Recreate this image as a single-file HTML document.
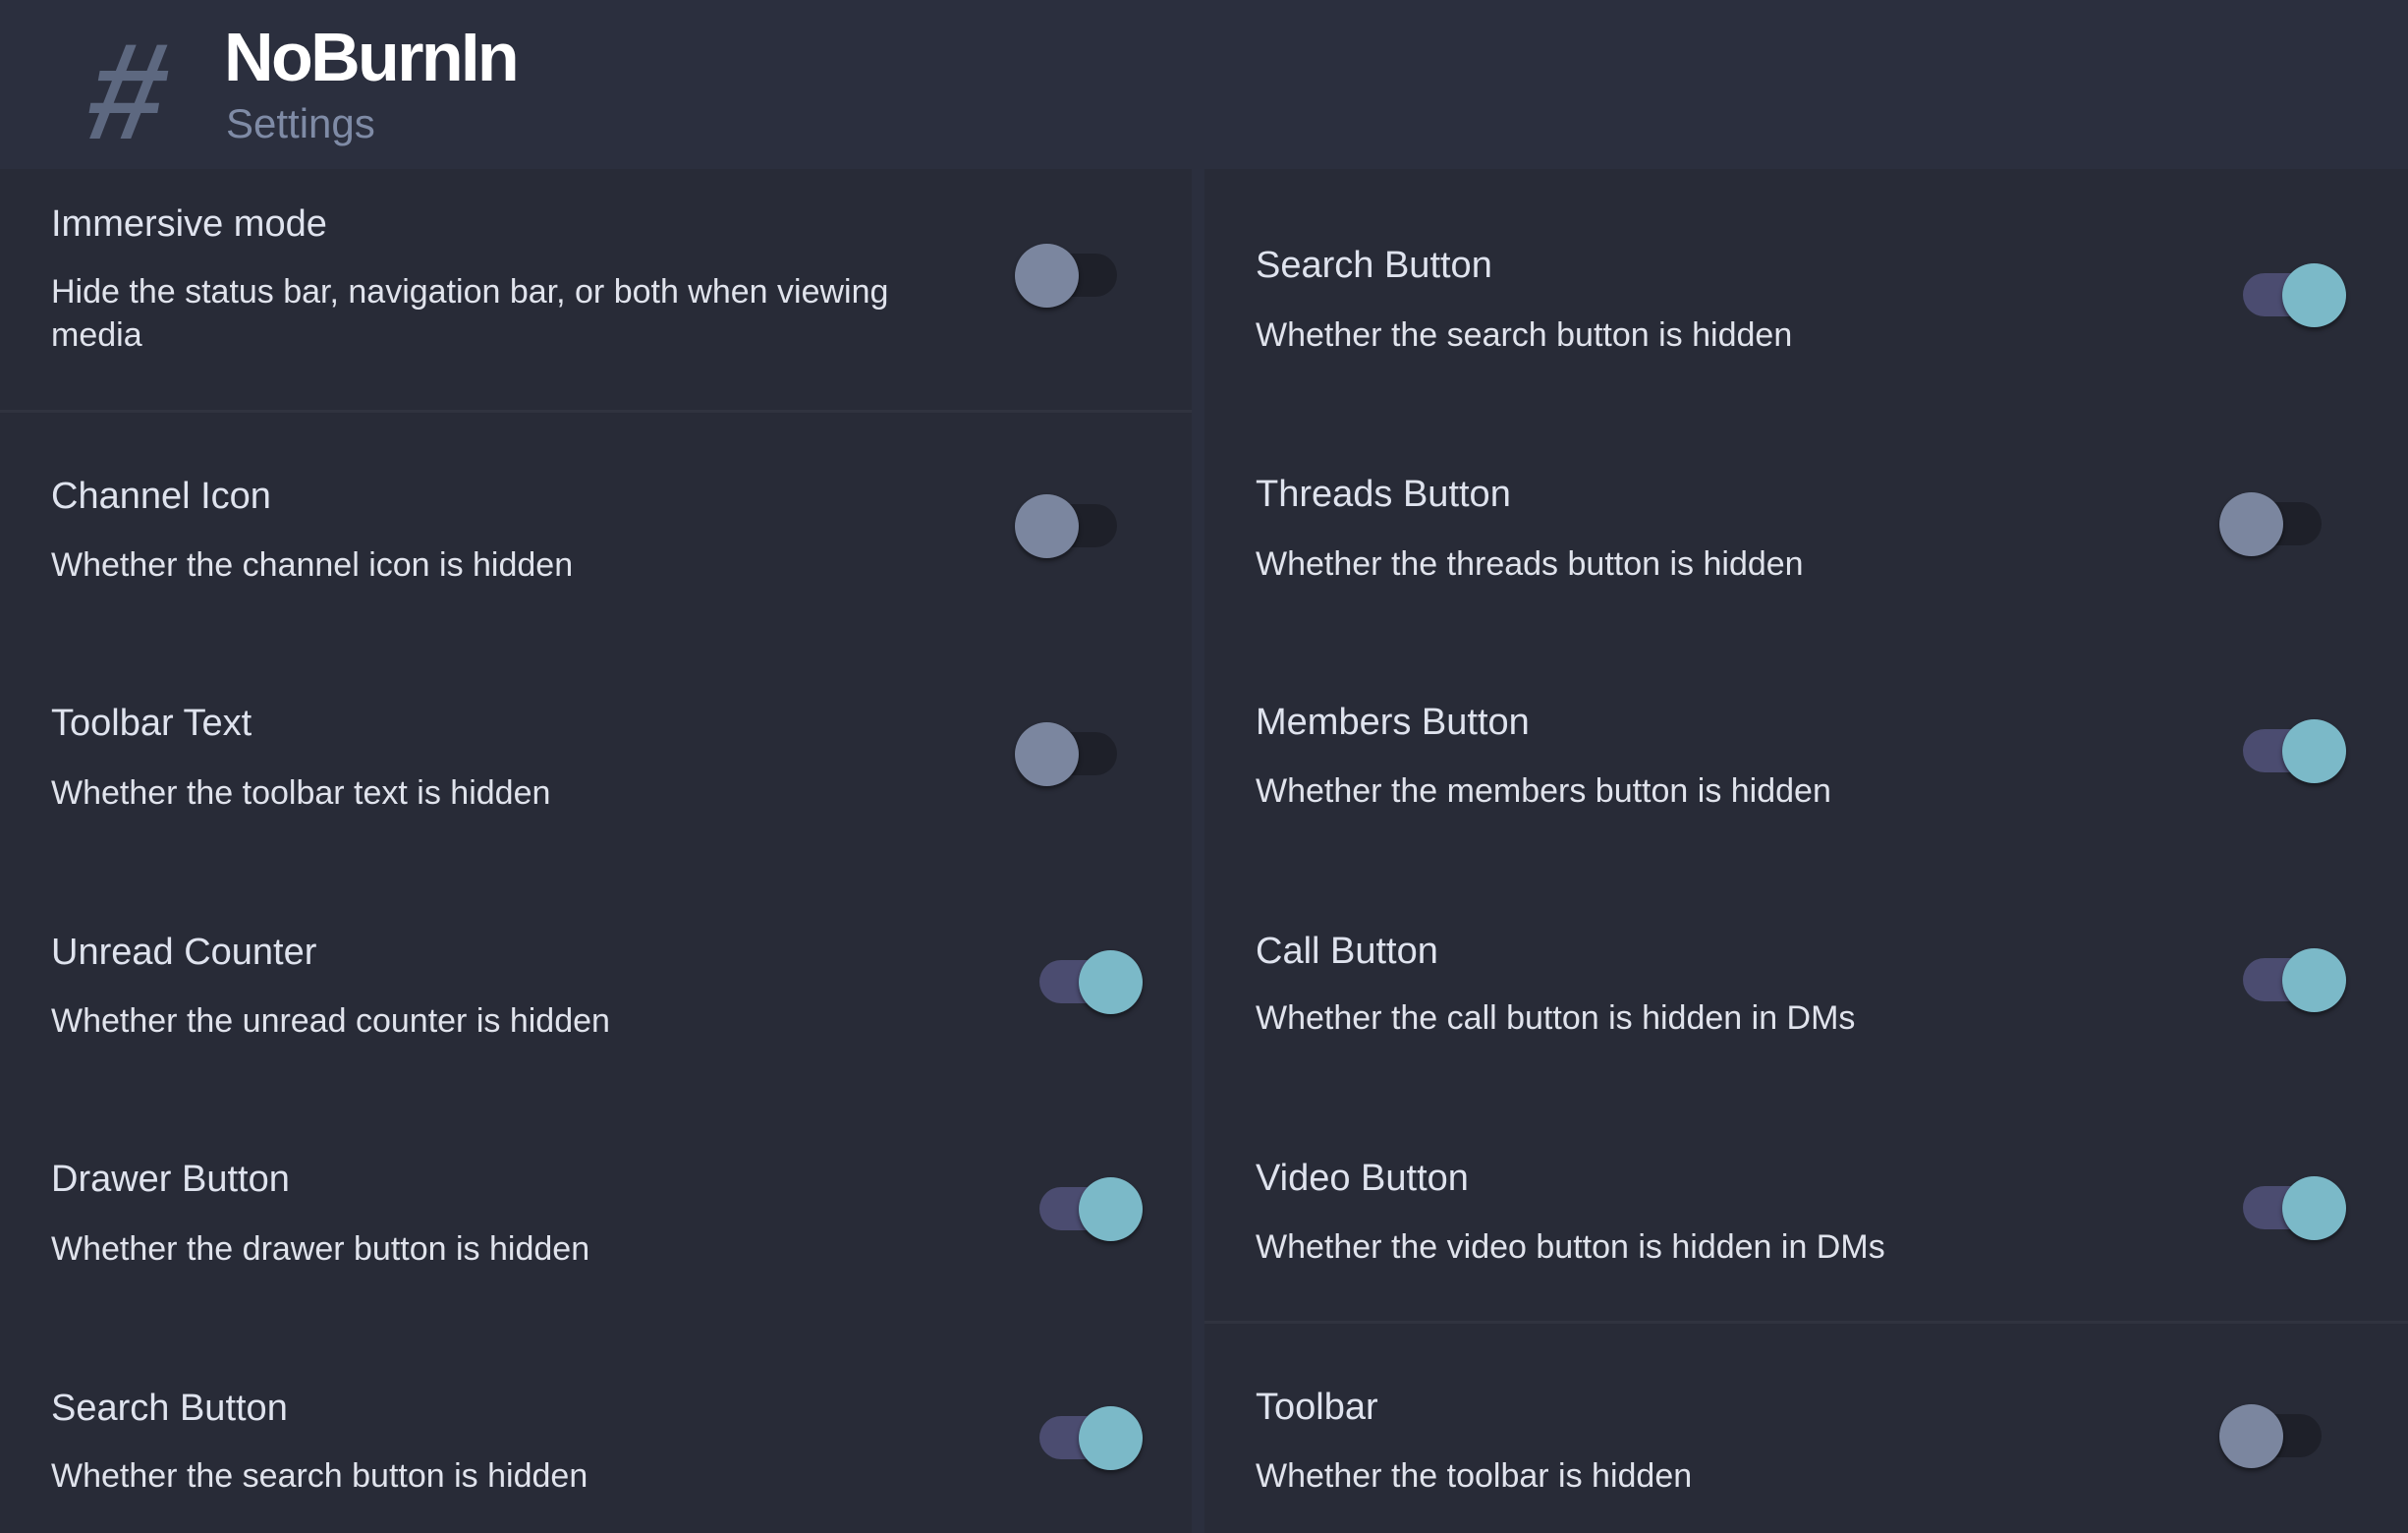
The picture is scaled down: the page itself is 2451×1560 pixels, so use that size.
<!DOCTYPE html>
<html><head><meta charset="utf-8"><style>
*{margin:0;padding:0;box-sizing:border-box}
body{width:2451px;height:1560px;background:#282b37;position:relative;overflow:hidden;font-family:"Liberation Sans",sans-serif}
.hdr{position:absolute;left:0;top:0;width:2451px;height:172px;background:#2b2f3e}
.strip{position:absolute;left:1213px;top:172px;width:13px;height:1388px;background:#2b2f3e}
.sep{position:absolute;height:3px;background:#30333f}
.t{position:absolute;font-size:38px;color:#dfe3ee;line-height:44px;white-space:nowrap}
.d{position:absolute;font-size:34px;color:#e0e3ec;line-height:44px;white-space:nowrap}
.tr{position:absolute;width:80px;height:44px;border-radius:22px}
.off{background:#1e2029}
.on{background:#4b4c70}
.k{position:absolute;width:65px;height:65px;border-radius:50%;top:-10px;box-shadow:0 3px 5px rgba(0,0,0,.45)}
.off .k{left:-24px;background:#7b869f}
.on .k{left:40px;background:#7bb9c8}
</style></head><body>
<div class="hdr"></div>
<div style="position:absolute;left:92px;top:26px;font-size:140px;font-weight:bold;color:#5d6880;line-height:134px;transform:skewX(-10deg)">#</div>
<div style="position:absolute;left:228px;top:18px;font-size:70px;font-weight:bold;color:#fff;letter-spacing:-2.6px;line-height:80px">NoBurnIn</div>
<div style="position:absolute;left:230px;top:100px;font-size:42px;color:#7f8ba6;line-height:52px">Settings</div>
<div class="strip"></div>
<div class="sep" style="left:0;top:417px;width:1213px"></div>
<div class="sep" style="left:1226px;top:1344px;width:1225px"></div>

<div class="t" style="left:52px;top:206px">Immersive mode</div>
<div class="d" style="left:52px;top:275px">Hide the status bar, navigation bar, or both when viewing</div>
<div class="d" style="left:52px;top:319px">media</div>
<div class="tr off" style="left:1057px;top:258px"><div class="k"></div></div>

<div class="t" style="left:52px;top:483px">Channel Icon</div>
<div class="d" style="left:52px;top:553px">Whether the channel icon is hidden</div>
<div class="tr off" style="left:1057px;top:513px"><div class="k"></div></div>

<div class="t" style="left:52px;top:714px">Toolbar Text</div>
<div class="d" style="left:52px;top:785px">Whether the toolbar text is hidden</div>
<div class="tr off" style="left:1057px;top:745px"><div class="k"></div></div>

<div class="t" style="left:52px;top:947px">Unread Counter</div>
<div class="d" style="left:52px;top:1017px">Whether the unread counter is hidden</div>
<div class="tr on" style="left:1058px;top:977px"><div class="k"></div></div>

<div class="t" style="left:52px;top:1178px">Drawer Button</div>
<div class="d" style="left:52px;top:1249px">Whether the drawer button is hidden</div>
<div class="tr on" style="left:1058px;top:1208px"><div class="k"></div></div>

<div class="t" style="left:52px;top:1411px">Search Button</div>
<div class="d" style="left:52px;top:1480px">Whether the search button is hidden</div>
<div class="tr on" style="left:1058px;top:1441px"><div class="k"></div></div>

<div class="t" style="left:1278px;top:248px">Search Button</div>
<div class="d" style="left:1278px;top:319px">Whether the search button is hidden</div>
<div class="tr on" style="left:2283px;top:278px"><div class="k"></div></div>

<div class="t" style="left:1278px;top:481px">Threads Button</div>
<div class="d" style="left:1278px;top:552px">Whether the threads button is hidden</div>
<div class="tr off" style="left:2283px;top:511px"><div class="k"></div></div>

<div class="t" style="left:1278px;top:713px">Members Button</div>
<div class="d" style="left:1278px;top:783px">Whether the members button is hidden</div>
<div class="tr on" style="left:2283px;top:742px"><div class="k"></div></div>

<div class="t" style="left:1278px;top:946px">Call Button</div>
<div class="d" style="left:1278px;top:1014px">Whether the call button is hidden in DMs</div>
<div class="tr on" style="left:2283px;top:975px"><div class="k"></div></div>

<div class="t" style="left:1278px;top:1177px">Video Button</div>
<div class="d" style="left:1278px;top:1247px">Whether the video button is hidden in DMs</div>
<div class="tr on" style="left:2283px;top:1207px"><div class="k"></div></div>

<div class="t" style="left:1278px;top:1410px">Toolbar</div>
<div class="d" style="left:1278px;top:1480px">Whether the toolbar is hidden</div>
<div class="tr off" style="left:2283px;top:1439px"><div class="k"></div></div>
</body></html>
